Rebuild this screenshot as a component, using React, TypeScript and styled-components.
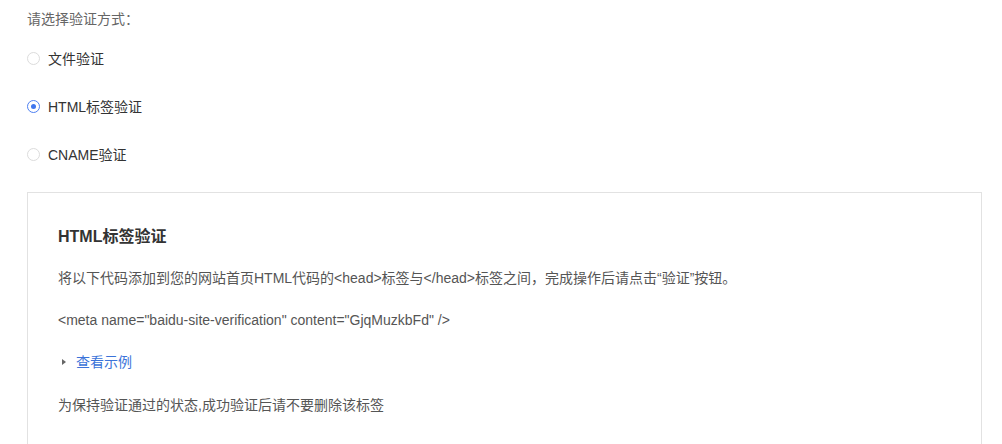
import React, { useState } from "react";
import styled, { createGlobalStyle } from "styled-components";

const Global = createGlobalStyle`
  html, body { margin: 0; padding: 0; background: #fff; }
  body { font-family: "Liberation Sans", "Noto Sans CJK SC", sans-serif; font-size: 14px; color: #333; }
`;

const Page = styled.div`
  padding: 9px 20px 0 27px;
`;

const Prompt = styled.div`
  line-height: 20px;
  color: #666;
`;

const Options = styled.div`
  display: flex;
  flex-direction: column;
  margin-top: 5px;
`;

const Option = styled.label`
  display: flex;
  align-items: center;
  height: 48px;
  gap: 8px;
  cursor: pointer;
  color: #333;
`;

const Radio = styled.span<{ $checked: boolean }>`
  box-sizing: border-box;
  width: 13px;
  height: 13px;
  border-radius: 50%;
  border: 1px solid ${(p) => (p.$checked ? "#4d7ff2" : "#dcdcdc")};
  display: flex;
  align-items: center;
  justify-content: center;
  &::after {
    content: "";
    width: 5px;
    height: 5px;
    border-radius: 50%;
    background: #3f76ee;
    display: ${(p) => (p.$checked ? "block" : "none")};
  }
`;

const Panel = styled.div`
  margin-top: 14px;
  border: 1px solid #e2e2e2;
  padding: 32px 30px 40px 30px;
  height: 300px;
`;

const Title = styled.h3`
  margin: 0;
  font-size: 16px;
  line-height: 24px;
  font-weight: bold;
  color: #333;
`;

const Para = styled.p<{ $top: number }>`
  margin: ${(p) => p.$top}px 0 0;
  line-height: 20px;
  color: #555;
`;

const Toggle = styled.div`
  margin-top: 22px;
  display: flex;
  align-items: center;
  line-height: 20px;
  padding-left: 4px;
  gap: 10px;
  color: #3b73d9;
  cursor: pointer;
`;

const Caret = styled.span`
  width: 0;
  height: 0;
  border-top: 3.5px solid transparent;
  border-bottom: 3.5px solid transparent;
  border-left: 4px solid #666;
`;

const options = ["文件验证", "HTML标签验证", "CNAME验证"];

export default function App() {
  const [sel, setSel] = useState(1);
  return (
    <Page>
      <Global />
      <Prompt>请选择验证方式：</Prompt>
      <Options>
        {options.map((o, i) => (
          <Option key={o} onClick={() => setSel(i)}>
            <Radio $checked={sel === i} />
            {o}
          </Option>
        ))}
      </Options>
      <Panel>
        <Title>HTML标签验证</Title>
        <Para $top={19}>
          将以下代码添加到您的网站首页HTML代码的&lt;head&gt;标签与&lt;/head&gt;标签之间，完成操作后请点击“验证”按钮。
        </Para>
        <Para $top={22}>&lt;meta name="baidu-site-verification" content="GjqMuzkbFd" /&gt;</Para>
        <Toggle>
          <Caret />
          查看示例
        </Toggle>
        <Para $top={23}>为保持验证通过的状态,成功验证后请不要删除该标签</Para>
      </Panel>
    </Page>
  );
}
